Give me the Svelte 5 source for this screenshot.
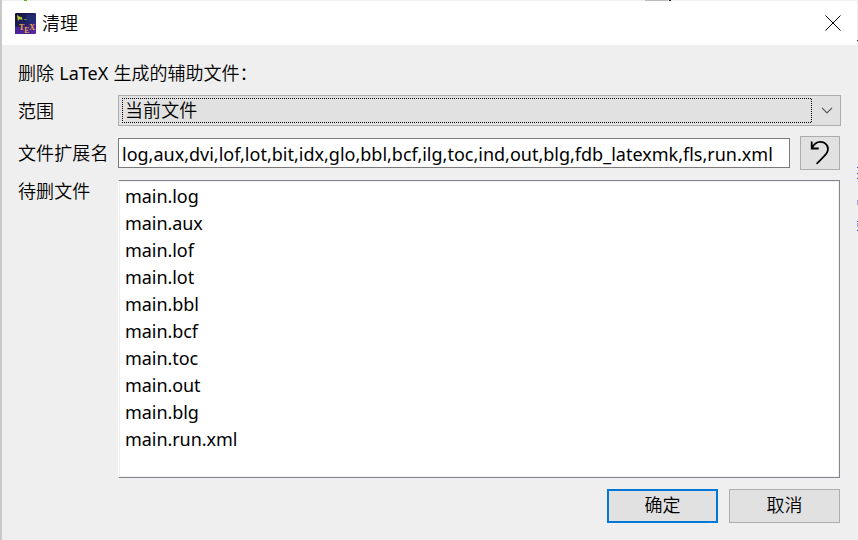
<script>
  const files = ['main.log', 'main.aux', 'main.lof', 'main.lot', 'main.bbl', 'main.bcf', 'main.toc', 'main.out', 'main.blg', 'main.run.xml'];
  const extensions = 'log,aux,dvi,lof,lot,bit,idx,glo,bbl,bcf,ilg,toc,ind,out,blg,fdb_latexmk,fls,run.xml';
</script>

<div class="window">
  <header>
    <svg class="logo" width="21" height="21" viewBox="0 0 21 21">
      <defs>
        <linearGradient id="night" x1="0" y1="0" x2="1" y2="1">
          <stop offset="0" stop-color="#10132e" /><stop offset=".5" stop-color="#25216b" /><stop offset="1" stop-color="#5a2cae" />
        </linearGradient>
      </defs>
      <rect width="21" height="21" rx="1" fill="url(#night)" />
      <path d="M0 14h7l5 5v2H0z" fill="#4a249a" />
      <path d="M11 2h9v8h-7z" fill="#202d72" />
      <path d="M2 2l4 2.500 1-1 0 2 1 1-4 0-1 2-.5-3z" fill="#b8ca31" />
      <path d="M9 6.500h3" stroke="#40943c" />
      <text x="4" y="17" class="tex">T<tspan class="low" dy="3">E</tspan><tspan dy="-3">X</tspan></text>
    </svg>
    <span>清理</span>
    <svg class="close" width="16" height="16" viewBox="0 0 16 16"><path d="M.5 .5l15 15M15.5 .5l-15 15" stroke="#000" stroke-width="1" /></svg>
  </header>
  <main>
    <p class="intro">删除 <span class="lat">LaTeX</span> 生成的辅助文件：</p>
    <div class="row scope">
      <span class="label">范围</span>
      <div class="combo">
        <div class="focus">
          <span>当前文件</span>
          <svg width="690" height="25" shape-rendering="crispEdges"><path d="M0 .5h690M0 24.5h690M.5 0v25M689.5 1v24" fill="none" stroke="#000" stroke-dasharray="1 1" /></svg>
        </div>
        <svg class="chevron" width="12" height="7" viewBox="0 0 12 7"><path d="M1 .8l5 5 5-5" fill="none" stroke="#555" stroke-width="1.2" /></svg>
      </div>
    </div>
    <div class="row ext">
      <span class="label">文件扩展名</span>
      <div class="input"><span class="lat">{extensions}</span></div>
      <div class="undo">
        <svg width="38" height="32" viewBox="0 0 38 32" fill="none" stroke="#000" stroke-width="1.8"><path d="M10.7 4.5v7h7M11 11.2c2-4.5 5-6.3 8.3-6.3 6 0 9.3 5.6 6.8 10.4-1 2-3.5 4.6-10.5 11.5" /></svg>
      </div>
    </div>
    <div class="row files">
      <span class="label">待删文件</span>
      <ul class="list">
        {#each files as file}<li><span class="lat">{file}</span></li>{/each}
      </ul>
    </div>
    <footer><div class="button primary">确定</div><div class="button">取消</div></footer>
  </main>
  <svg class="edges" width="858" height="540">
    <path d="M24 .5h3" stroke="#4fb81b" />
    <path d="M645 .5h23" stroke="#bcbcbc" />
    <path d="M669 .5h2M857 40.5h1M0 517.5h2M0 523.5h2M0 537.5h2" stroke="#222" />
    <path d="M857 167.5h1M857 173.5h1M857 178.5h1M857 221.5h1M857 230.5h1" stroke="#4140cf" />
    <path d="M857.5 200v5M857.5 223v4" stroke="#a49cdd" />
    <path d="M1 532.5h1" stroke="#c18b48" />
  </svg>
</div>

<style>
  :global(body) { margin: 0; background: #efefef; }
  .window, .window * { box-sizing: border-box; }
  .window { position: relative; width: 858px; height: 540px; overflow: hidden; background: #efefef; border-left: 2px solid #c9c9c9; padding-top: 1px; font: 350 18px/24px "Noto Sans CJK SC", sans-serif; color: #000; }
  header { height: 44px; width: 855px; display: flex; align-items: center; background: #fff; padding: 0 16px 0 13px; }
  header span { margin-left: 6px; padding-bottom: 3px; }
  .close { margin-left: auto; margin-bottom: 1px; }
  .tex { font: bold 8px "Liberation Serif", serif; fill: #f0a83c; }
  .low { font-size: 7.5px; }
  main { padding: 15px 17px 0 16px; }
  .intro { margin: 0; height: 24px; white-space: pre; word-spacing: 1.2px; }
  .lat { font-family: "Noto Sans", sans-serif; font-weight: 400; }
  .row { display: flex; }
  .label { width: 100px; flex: none; white-space: nowrap; letter-spacing: .1px; }
  .scope { margin-top: 11px; height: 31px; align-items: center; }
  .scope .label { padding-bottom: 2px; }
  .combo { width: 723px; height: 31px; background: #e1e1e1; border: 1px solid #adadad; display: flex; align-items: center; padding-left: 3px; }
  .focus { position: relative; width: 690px; height: 25px; padding-left: 3px; line-height: 23px; letter-spacing: .1px; }
  .focus svg { position: absolute; inset: 0; }
  .chevron { margin-left: 9px; }
  .ext { margin-top: 10px; height: 34px; align-items: center; }
  .ext .label { padding-bottom: 2px; }
  .input { width: 672px; height: 30px; background: #fff; border: 1px solid #7a7a7a; padding-left: 3px; line-height: 28px; white-space: nowrap; }
  .undo { margin-left: 10px; width: 40px; height: 34px; border: 1px solid #adadad; background: #e1e1e1; }
  .undo svg { display: block; }
  .files { margin-top: 10px; height: 298px; }
  .files .label { line-height: 21px; }
  .list { margin: 0; width: 722px; height: 298px; list-style: none; background: #fff; border: 1px solid #828790; border-left-color: #fff; box-shadow: inset 1px 1px #efefef, inset -1px -1px #efefef; padding: 1px 6px; }
  li { height: 27px; line-height: 27px; letter-spacing: -.06px; }
  footer { display: flex; justify-content: flex-end; gap: 11px; margin-top: 11px; padding-right: 1px; }
  .button { width: 111px; height: 34px; border: 1px solid #adadad; background: #e1e1e1; text-align: center; line-height: 29px; }
  .primary { border: 2px solid #0078d7; line-height: 27px; }
  .edges { position: absolute; left: -2px; top: 0; pointer-events: none; }
</style>
